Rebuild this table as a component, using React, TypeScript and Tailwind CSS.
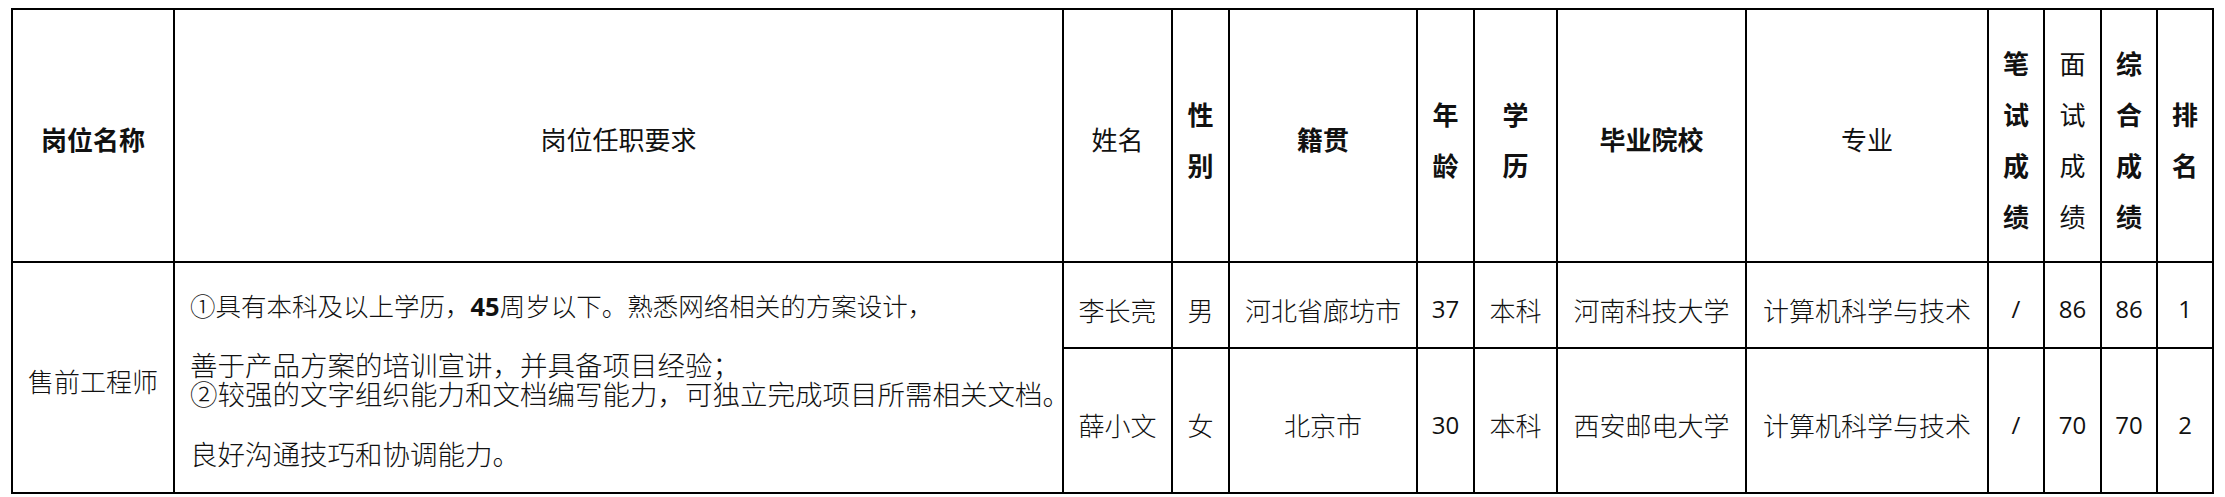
const cjk = "font-['Noto_Sans_CJK_SC',sans-serif]";
const num = "font-['Open_Sans','Noto_Sans_CJK_SC',sans-serif]";

const colWidths = [162, 889, 109, 57, 188, 57, 83, 189, 242, 56, 57, 56, 56];

type Row = {
  name: string;
  gender: string;
  origin: string;
  age: string;
  degree: string;
  school: string;
  major: string;
  written: string;
  interview: string;
  total: string;
  rank: string;
};

const rows: Row[] = [
  {
    name: "李长亮",
    gender: "男",
    origin: "河北省廊坊市",
    age: "37",
    degree: "本科",
    school: "河南科技大学",
    major: "计算机科学与技术",
    written: "/",
    interview: "86",
    total: "86",
    rank: "1",
  },
  {
    name: "薛小文",
    gender: "女",
    origin: "北京市",
    age: "30",
    degree: "本科",
    school: "西安邮电大学",
    major: "计算机科学与技术",
    written: "/",
    interview: "70",
    total: "70",
    rank: "2",
  },
];

// header cell, bold or plain, lines stacked vertically
const Head = ({ lines, plain }: { lines: string[]; plain?: boolean }) => (
  <th className={`border-2 border-black p-0 align-middle ${plain ? "font-normal" : "font-semibold"}`}>
    <div className="flex flex-col items-center pt-[6px] text-[26px] leading-[51px] whitespace-nowrap">
      {lines.map((l) => (
        <span key={l}>{l}</span>
      ))}
    </div>
  </th>
);

const Cell = ({ children, isNum }: { children: React.ReactNode; isNum?: boolean }) => (
  <td
    className={`border-2 border-black p-0 text-center align-middle whitespace-nowrap ${
      isNum ? `${num} text-[24px] font-normal` : "text-[26px] font-light"
    }`}
  >
    <div className="pt-[8px]">{children}</div>
  </td>
);

const App = () => {
  return (
    <div className={`w-[2225px] h-[497px] bg-white text-[#111] ${cjk}`}>
      <table className="ml-[11px] mt-[8px] table-fixed border-collapse w-[2203px]">
        <colgroup>
          {colWidths.map((w, i) => (
            <col key={i} style={{ width: w }} />
          ))}
        </colgroup>
        <thead>
          <tr className="h-[253px]">
            <Head lines={["岗位名称"]} />
            <Head lines={["岗位任职要求"]} plain />
            <Head lines={["姓名"]} plain />
            <Head lines={["性", "别"]} />
            <Head lines={["籍贯"]} />
            <Head lines={["年", "龄"]} />
            <Head lines={["学", "历"]} />
            <Head lines={["毕业院校"]} />
            <Head lines={["专业"]} plain />
            <Head lines={["笔", "试", "成", "绩"]} />
            <Head lines={["面", "试", "成", "绩"]} plain />
            <Head lines={["综", "合", "成", "绩"]} />
            <Head lines={["排", "名"]} />
          </tr>
        </thead>
        <tbody>
          {rows.map((r, i) => (
            <tr key={r.name} className={i === 0 ? "h-[86px]" : "h-[145px]"}>
              {i === 0 && (
                <>
                  <td
                    rowSpan={2}
                    className="border-2 border-black p-0 text-center align-middle text-[26px] font-light"
                  >
                    <div className="pt-[6px]">售前工程师</div>
                  </td>
                  <td rowSpan={2} className="border-2 border-black p-0 align-top font-light">
                    <div className="pl-[15px] pt-[27px] whitespace-nowrap">
                      <div className="text-[25.5px] leading-[30px]">
                        ①具有本科及以上学历，
                        <span className={`${num} font-bold`}>45</span>
                        周岁以下。熟悉网络相关的方案设计，
                      </div>
                      <div className="mt-[29px] text-[27.5px] leading-[29px]">
                        善于产品方案的培训宣讲，并具备项目经验；
                      </div>
                      <div className="text-[27.5px] leading-[29px]">
                        ②较强的文字组织能力和文档编写能力，可独立完成项目所需相关文档。
                      </div>
                      <div className="mt-[31px] text-[27.5px] leading-[29px]">良好沟通技巧和协调能力。</div>
                    </div>
                  </td>
                </>
              )}
              <Cell>{r.name}</Cell>
              <Cell>{r.gender}</Cell>
              <Cell>{r.origin}</Cell>
              <Cell isNum>{r.age}</Cell>
              <Cell>{r.degree}</Cell>
              <Cell>{r.school}</Cell>
              <Cell>{r.major}</Cell>
              <Cell isNum>{r.written}</Cell>
              <Cell isNum>{r.interview}</Cell>
              <Cell isNum>{r.total}</Cell>
              <Cell isNum>{r.rank}</Cell>
            </tr>
          ))}
        </tbody>
      </table>
    </div>
  );
};

export default App;
